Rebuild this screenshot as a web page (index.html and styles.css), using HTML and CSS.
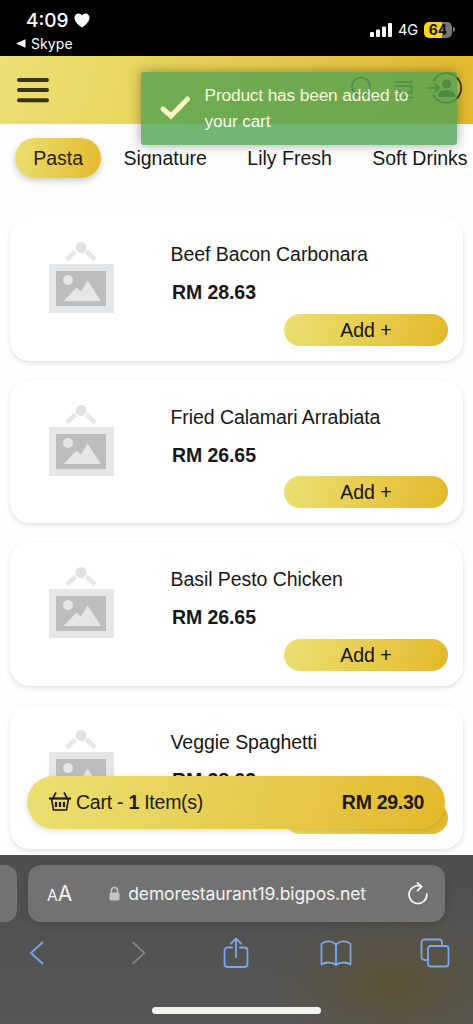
FILE: index.html
```html
<!DOCTYPE html>
<html lang="en">
<head>
<meta charset="utf-8">
<title>Menu</title>
<link rel="stylesheet" href="styles.css">
</head>
<body>
<svg class="defs" width="0" height="0">
  <symbol id="photo" viewBox="0 0 66 72">
    <path d="M19 17.500 28 9M47 17.500 38 9" stroke="#e4e6e8" stroke-width="4.500" fill="none"/>
    <circle cx="33" cy="5.500" r="7" fill="#fff"/>
    <circle cx="33" cy="5.500" r="5.500" fill="#dfe1e3"/>
    <path d="M1 22h65v49H1z" fill="#e4e6e8"/>
    <path d="M8 29h50v35H8z" fill="#bbbdbf"/>
    <circle cx="20" cy="38" r="5" fill="#e4e6e8"/>
    <path d="M15.500 59 28.500 45.500 33 49.500 39.500 38.500 53 59z" fill="#e4e6e8"/>
  </symbol>
</svg>
<div class="phone">
  <header class="status">
    <div class="status-left">
      <div class="clock">4:09<svg width="16" height="15" viewBox="0 0 16 15"><path d="M8 14.500C4 12 .5 8.500.5 4.800.5 2.200 2.300.5 4.400.5 6 .5 7.300 1.300 8 2.600 8.700 1.300 10 .5 11.600.5c2.100 0 3.900 1.700 3.900 4.300C15.500 8.500 12 12 8 14.500z" fill="#fff"/></svg></div>
      <div class="back"><svg width="10" height="9" viewBox="0 0 10 9"><path d="M0 4.500 9.500.3v8.400z" fill="#fff"/></svg>Skype</div>
    </div>
    <div class="status-right">
      <svg width="22" height="14" viewBox="0 0 22 14" fill="#fff"><rect y="9" width="4" height="5" rx="1"/><rect x="6" y="6.500" width="4" height="7.500" rx="1"/><rect x="12" y="3.500" width="4" height="10.500" rx="1"/><rect x="18" width="4" height="14" rx="1"/></svg>
      <span class="net">4G</span>
      <span class="battery">64</span><span class="battery-tip"></span>
    </div>
  </header>

  <nav class="appbar">
    <svg width="32" height="26" viewBox="0 0 32 26"><path d="M2 3h28M2 13h28M2 23.300h28" stroke="#37331d" stroke-width="4" stroke-linecap="round"/></svg>
    <div class="appbar-icons">
      <svg width="24" height="26" viewBox="0 0 24 26" fill="none" stroke="#37331d" stroke-width="1.600"><circle cx="11" cy="9.500" r="9"/><path d="m17.500 16.500 5.500 6"/></svg>
      <svg width="20" height="20" viewBox="0 0 20 20" fill="none" stroke="#37331d" stroke-width="1.700"><path d="M1 2h18M1 6h16.500v7H6v-2.500M1 17.500h6M10 17.500h9"/></svg>
      <svg width="36" height="32" viewBox="0 0 36 32" fill="none" stroke="#37331d" stroke-width="1.700"><path d="M7 7.500A14.800 14.800 0 1 1 7 20.500M0 14h13M8.500 9.500 13 14l-4.500 4.500"/><circle cx="20.500" cy="10" r="4.500" fill="#37331d" stroke="none"/><path d="M12 23c0-5 3-7 8.500-7s8.500 2 8.500 7z" fill="#37331d" stroke="none"/></svg>
    </div>
  </nav>

  <div class="tabs">
    <a class="tab active">Pasta</a><a class="tab">Signature</a><a class="tab">Lily Fresh</a><a class="tab">Soft Drinks</a>
  </div>

  <main class="list">
    <article class="card">
      <svg class="thumb"><use href="#photo"/></svg>
      <div class="info"><h2>Beef Bacon Carbonara</h2><b class="price">RM 28.63</b><button class="add">Add +</button></div>
    </article>
    <article class="card">
      <svg class="thumb"><use href="#photo"/></svg>
      <div class="info"><h2>Fried Calamari Arrabiata</h2><b class="price">RM 26.65</b><button class="add">Add +</button></div>
    </article>
    <article class="card">
      <svg class="thumb"><use href="#photo"/></svg>
      <div class="info"><h2>Basil Pesto Chicken</h2><b class="price">RM 26.65</b><button class="add">Add +</button></div>
    </article>
    <article class="card">
      <svg class="thumb"><use href="#photo"/></svg>
      <div class="info"><h2>Veggie Spaghetti</h2><b class="price">RM 28.63</b><button class="add"></button></div>
    </article>
  </main>

  <footer class="browser">
    <div class="address-row">
      <div class="prev-tab"></div>
      <div class="address">
        <span class="aa"><small>A</small>A</span>
        <span class="url"><svg width="11" height="15" viewBox="0 0 11 15"><path d="M2.500 7V4.500a3 3 0 0 1 6 0V7" fill="none" stroke="#c4c4c4" stroke-width="1.500"/><rect x=".5" y="6.500" width="10" height="8" rx="1.500" fill="#c4c4c4"/></svg>demorestaurant19.bigpos.net</span>
        <svg class="reload" width="20" height="24" viewBox="0 0 20 24" fill="none" stroke="#f2f2f2" stroke-width="1.700" stroke-linecap="round" stroke-linejoin="round"><path d="M18.800 12A8.900 8.900 0 1 1 13.500 4.500M9.500.9l4.200 3.700-4.200 4"/></svg>
      </div>
    </div>
    <div class="tools">
      <svg width="16" height="26" viewBox="0 0 16 26"><path d="M13.500 2.500 2 13l11.500 10.500"/></svg>
      <svg class="disabled" width="16" height="26" viewBox="0 0 16 26"><path d="M2 2.500 13.500 13 2 23.500"/></svg>
      <svg width="26" height="32" viewBox="0 0 26 32"><path d="M9 10.500H4.500a3 3 0 0 0-3 3V27a3 3 0 0 0 3 3h17a3 3 0 0 0 3-3V13.500a3 3 0 0 0-3-3H17M13 20V1.500M8 6.500l5-5 5 5"/></svg>
      <svg width="32" height="27" viewBox="0 0 32 27"><path d="M16 5v20M16 5C13.500.5 5 0 1.500 4v20.500C5 22 12 21.500 16 25c4-3.500 11-3 14.500-.5V4C27 0 18.500.5 16 5z"/></svg>
      <svg width="30" height="30" viewBox="0 0 30 30"><path d="M8 22H4.500a3 3 0 0 1-3-3V4.500a3 3 0 0 1 3-3H19a3 3 0 0 1 3 3V8"/><rect x="8" y="8" width="20.500" height="20.500" rx="3"/></svg>
    </div>
    <div class="home"></div>
  </footer>

  <div class="toast">
    <svg width="32" height="26" viewBox="0 0 32 26"><path d="m4 14 8 7L28.500 4" fill="none" stroke="#fffde0" stroke-width="5" stroke-linecap="round" stroke-linejoin="miter"/></svg>
    <p>Product has been added to<br>your cart</p>
  </div>
  <div class="cart">
    <span class="cart-left"><svg width="24" height="20" viewBox="0 0 24 20" fill="none" stroke="#1d1a08" stroke-width="1.600"><path d="M1 5.500h22" stroke-width="2.200"/><path d="M8-.5 5 5M16-.5 19 5M3.500 6l2 11h13l2-11"/><path d="M8 9v5M12 9v5M16 9v5" stroke-width="2.200"/></svg><span class="cart-label">Cart - <b>1</b> Item(s)</span></span>
    <b class="total">RM 29.30</b>
  </div>
</div>
</body>
</html>
```
FILE: styles.css
```css
* { box-sizing: border-box; }
body { margin: 0; background: #fff; font-family: "Liberation Sans", Arial, sans-serif; color: #171717; }
svg { display: block; flex: none; overflow: visible; }
.defs { position: absolute; }
.phone { position: relative; width: 473px; height: 1024px; overflow: hidden; display: flex; flex-direction: column; background: #fefefe; }

.status { height: 56px; flex: none; background: #000; color: #fff; font-family: Inter, sans-serif; display: flex; justify-content: space-between; padding: 8px 18px 0 16px; }
.clock { display: flex; align-items: center; gap: 6px; height: 24px; padding-left: 10px; font-size: 19px; font-weight: 500; }
.back { display: flex; align-items: center; gap: 5px; height: 22px; font-size: 14px; letter-spacing: .1px; }
.status-right { display: flex; align-items: center; height: 43px; }
.net { font-size: 14.500px; margin: 0 6px 0 6px; letter-spacing: -.1px; }
.battery { width: 28px; height: 16px; border-radius: 5px; background: linear-gradient(90deg, #f8d71c 64%, #77777a 64%); color: #1a1600; font-size: 14px; font-weight: 700; line-height: 16px; text-align: center; }
.battery-tip { width: 2px; height: 5px; margin-left: 1px; border-radius: 0 2px 2px 0; background: #77777a; }

.appbar { height: 68px; flex: none; background: linear-gradient(105deg, #ebe073, #e3ba2e); display: flex; align-items: center; justify-content: space-between; padding: 0 11px 0 17px; }
.appbar-icons { display: flex; align-items: center; gap: 20px; }
.appbar-icons svg:last-child { margin-left: -8px; }

.tabs { flex: none; display: flex; gap: 4px; padding: 14px 0 0 15px; height: 93px; font-size: 19.500px; }
.tab { flex: none; height: 40px; line-height: 41px; padding: 0 18.200px; border-radius: 20px; white-space: nowrap; }
.tab.active { background: linear-gradient(105deg, #ebe073, #e3b92b); box-shadow: 0 3px 7px rgba(0,0,0,.2); color: #2b240b; }

.list { flex: none; height: 637.500px; overflow: hidden; display: flex; flex-direction: column; gap: 19.200px; padding: 0 10px; }
.card { flex: none; height: 143.500px; border-radius: 20px; background: #fff; box-shadow: 0 2px 5px rgba(0,0,0,.12); display: flex; padding: 0 15px 0 38px; }
.thumb { width: 66px; height: 72px; margin-top: 25px; }
.info { flex: 1; margin-left: 56.500px; display: flex; flex-direction: column; }
.info h2 { margin: 25px 0 0; font-size: 19.500px; line-height: 25px; font-weight: 400; letter-spacing: -.06px; white-space: nowrap; }
.price { margin: 13px 0 0 1.500px; font-size: 19.500px; line-height: 25px; letter-spacing: -.08px; }
.add { align-self: flex-end; width: 164px; height: 32px; margin-top: 8.500px; padding: 0; border: 0; border-radius: 16px; background: linear-gradient(105deg, #ebe073, #e3b92b); font: 19.500px/32px "Liberation Sans", Arial, sans-serif; color: #171405; }

.browser { flex: 1; background: radial-gradient(ellipse 125px 70px at 395px 130px, #5a5134, rgba(90,81,52,0)), linear-gradient(#4e4e4f, #565656); padding-top: 10.500px; font-family: Inter, sans-serif; }
.address-row { display: flex; gap: 11px; height: 57px; }
.prev-tab { width: 17px; background: #727272; border-radius: 0 12px 12px 0; }
.address { width: 417px; background: #727272; border-radius: 13px; box-shadow: 0 2px 8px rgba(0,0,0,.15); display: flex; align-items: center; justify-content: space-between; padding: 0 17px 0 19px; color: #f2f2f2; }
.aa { font-size: 21px; }
.aa small { font-size: 15.500px; }
.url { display: flex; align-items: center; gap: 8px; font-size: 17.500px; letter-spacing: -.12px; margin-right: 5px; }
.tools { display: grid; grid-template-columns: 73px 132px 62px 137px 62px; justify-items: center; align-items: center; height: 62px; fill: none; stroke: #7ba7ea; stroke-width: 1.800; stroke-linecap: round; stroke-linejoin: round; }
.tools .disabled { stroke: #818181; }
.home { width: 169px; height: 6.500px; margin: 23px auto 0; border-radius: 4px; background: #f3f3f0; }

.toast { position: absolute; left: 141px; top: 71.500px; width: 316px; height: 73px; border-radius: 3px; background: #51a351; opacity: .8; box-shadow: 0 0 12px rgba(0,0,0,.45); display: flex; align-items: center; gap: 13.500px; padding-left: 18px; color: #fff; }
.toast p { margin: 0; font-size: 17.300px; line-height: 26.500px; letter-spacing: -.15px; white-space: nowrap; }
.cart { position: absolute; left: 27px; top: 776px; width: 418px; height: 53px; border-radius: 26.500px; background: linear-gradient(105deg, #ebe073, #e3b92b); box-shadow: 0 2px 6px rgba(0,0,0,.13); display: flex; align-items: center; justify-content: space-between; padding: 0 21px; font-size: 19.500px; color: #1d1a08; }
.cart-left { display: flex; align-items: center; gap: 4px; }
.cart-label { letter-spacing: -.25px; }
.total { letter-spacing: -.3px; }
```
